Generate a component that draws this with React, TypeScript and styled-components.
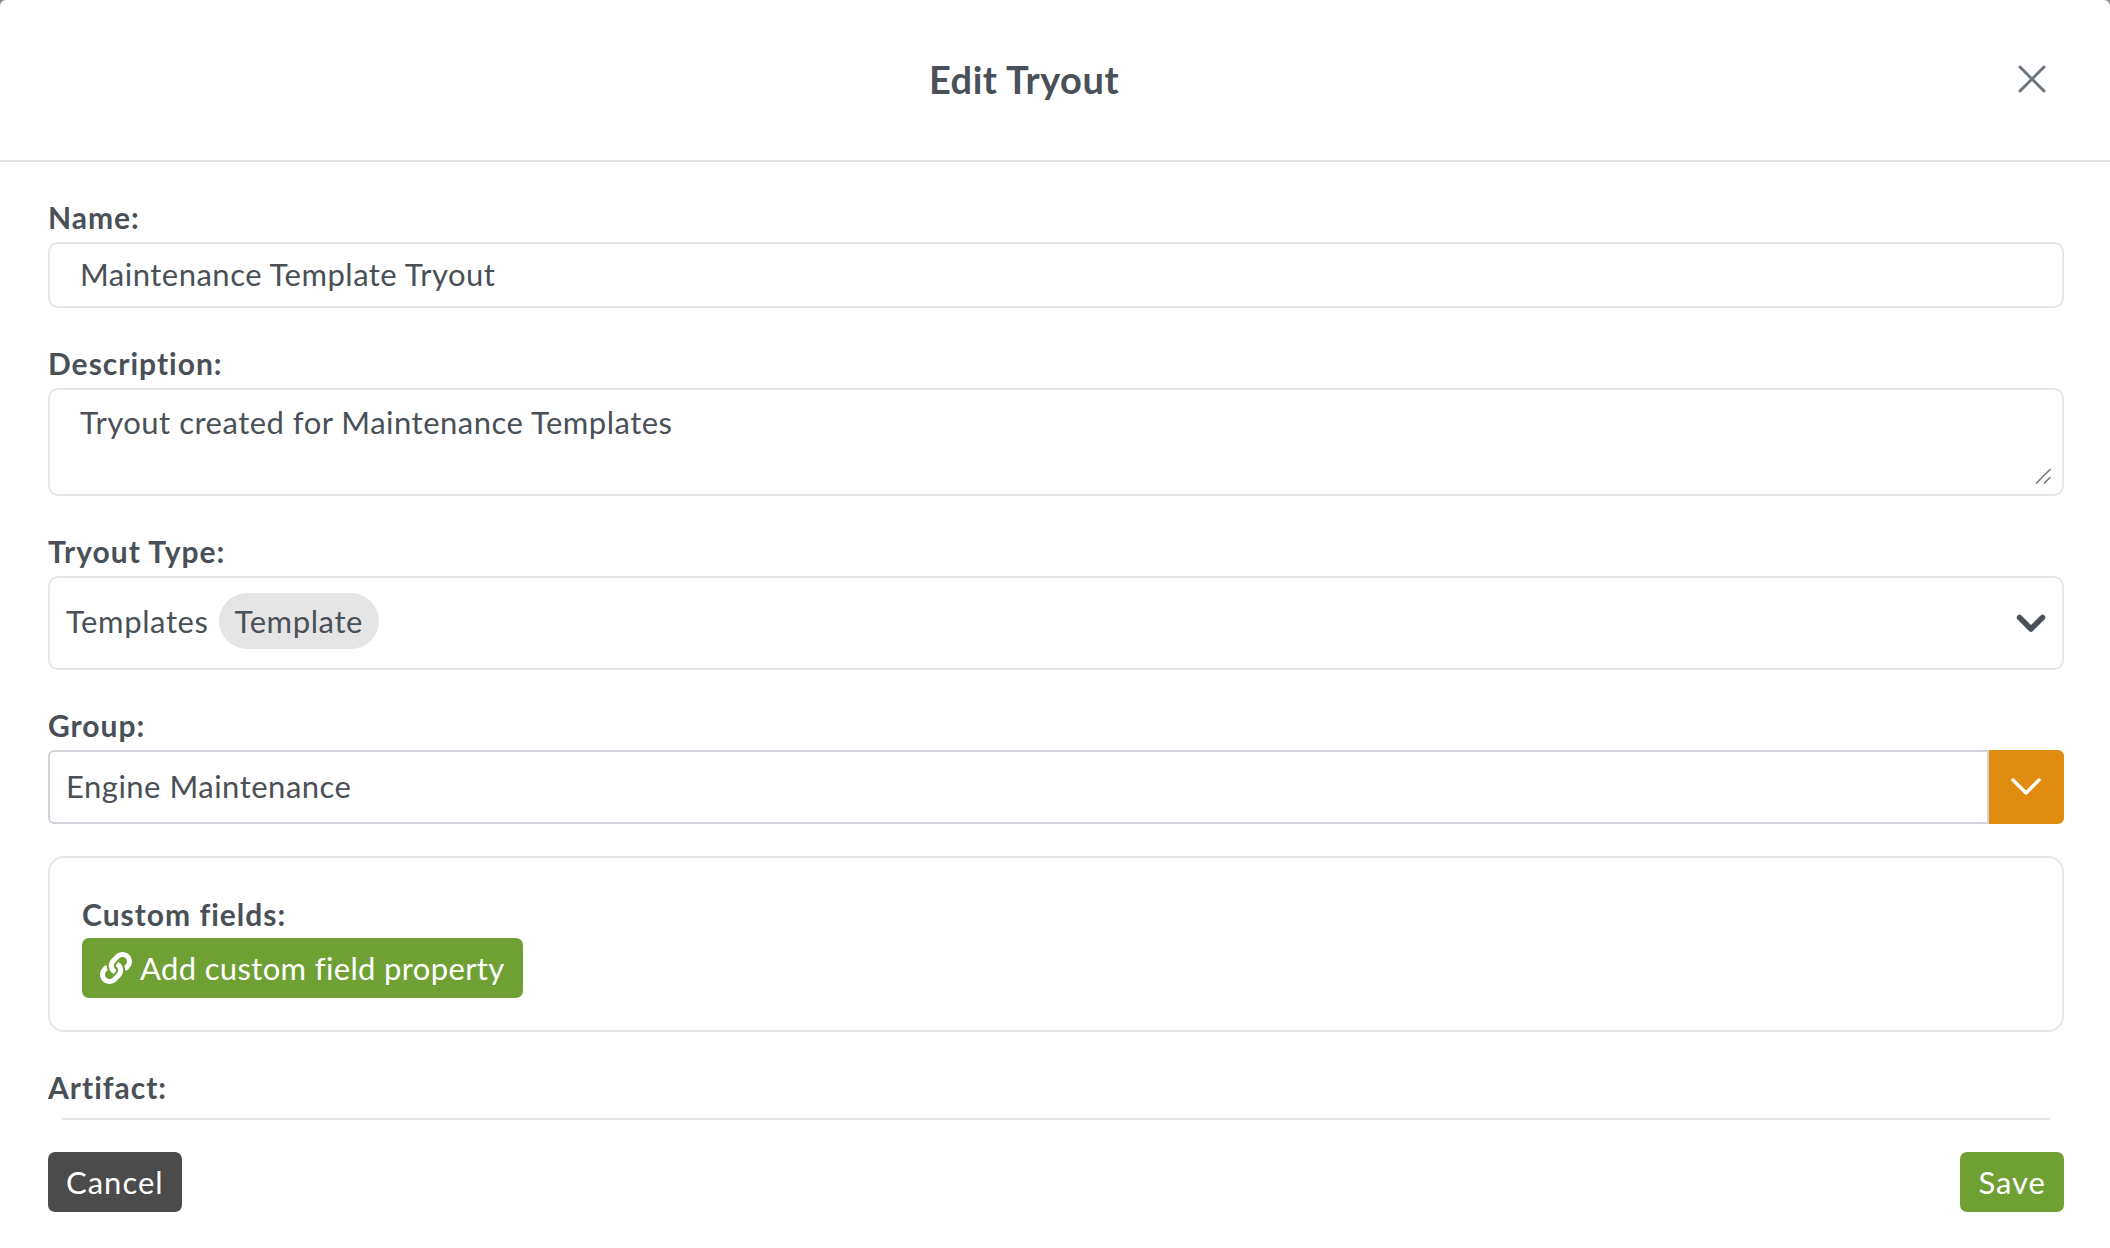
import React from 'react';
import styled, { createGlobalStyle } from 'styled-components';
import { FaLink } from 'react-icons/fa';

const Global = createGlobalStyle`
  html, body { margin: 0; padding: 0; background: #8f8f8f; }
  * { box-sizing: border-box; }
  body { font-family: Lato, "Open Sans", "Liberation Sans", sans-serif; color: #495057; }
`;

const Modal = styled.div`
  width: 2110px;
  height: 1248px;
  overflow: hidden;
  background: #fff;
  border-radius: 6px 6px 0 0;
`;

const Header = styled.header`
  height: 162px;
  display: flex;
  align-items: center;
  padding: 0 62px 2px 48px;
  border-bottom: 2px solid #dee2e6;
`;

const Title = styled.h1`
  flex: 1;
  margin: 0 16px 0 0;
  text-align: center;
  font-size: 38px;
  line-height: 48px;
  font-weight: 700;
  letter-spacing: 0.5px;
  color: #495057;
`;

const CloseButton = styled.button`
  width: 32px;
  height: 32px;
  padding: 0;
  border: 0;
  background: none;
  color: #6c757d;
  display: flex;
  align-items: center;
  justify-content: center;
`;

const Body = styled.main`
  padding: 35px 46px 0 48px;
`;

const Label = styled.label<{ $gap?: number }>`
  display: block;
  font-size: 30px;
  line-height: 40px;
  font-weight: 700;
  letter-spacing: 1px;
  color: #495057;
  margin-bottom: ${p => p.$gap ?? 5}px;
`;

const TextInput = styled.input`
  display: block;
  width: 100%;
  height: 66px;
  padding: 0 30px 3px;
  border: 2px solid #e6e6e6;
  border-radius: 10px;
  font: 400 31px Lato, sans-serif;
  letter-spacing: 0.5px;
  color: #495057;
  outline: none;
  margin-bottom: 35px;
`;

const TextAreaWrap = styled.div`
  position: relative;
  margin-bottom: 35px;
`;

const TextArea = styled.textarea`
  display: block;
  width: 100%;
  height: 108px;
  padding: 11px 30px;
  border: 2px solid #e6e6e6;
  border-radius: 10px;
  font: 400 31px/42px Lato, sans-serif;
  letter-spacing: 0.5px;
  color: #495057;
  outline: none;
  resize: none;
`;

const ResizeGrip = styled.svg`
  position: absolute;
  right: 13px;
  bottom: 12px;
  width: 16px;
  height: 16px;
`;

const SelectBox = styled.div`
  height: 94px;
  display: flex;
  align-items: center;
  justify-content: space-between;
  padding: 0 16px;
  border: 2px solid #e6e6e6;
  border-radius: 10px;
  margin-bottom: 35px;
`;

const SelectValues = styled.div`
  display: flex;
  align-items: center;
  gap: 10px;
  font-size: 31px;
  letter-spacing: 0.6px;
  margin-bottom: 5px;
`;

const Chip = styled.span`
  height: 56px;
  padding: 0 16px;
  display: flex;
  align-items: center;
  border-radius: 28px;
  background: #e5e5e5;
`;

const GroupRow = styled.div`
  display: flex;
  height: 74px;
  margin-bottom: 32px;
`;

const GroupField = styled.div`
  flex: 1;
  display: flex;
  align-items: center;
  padding: 0 16px 2px;
  border: 2px solid #ced4da;
  border-radius: 6px 0 0 6px;
  font-size: 31px;
  letter-spacing: 0.5px;
`;

const GroupToggle = styled.div`
  width: 75px;
  display: flex;
  align-items: center;
  justify-content: center;
  padding-right: 1px;
  background: #df8c11;
  border-radius: 0 6px 6px 0;
  color: #fff;
`;

const CustomCard = styled.section`
  height: 176px;
  padding: 36px 32px 0;
  border: 2px solid #e6e6e6;
  border-radius: 16px;
  margin-bottom: 35px;
`;

const PrimaryButton = styled.button<{ $tracking?: number }>`
  height: 60px;
  display: inline-flex;
  align-items: center;
  gap: 8px;
  padding: 0 18px;
  border: 0;
  border-radius: 7px;
  font: 400 31px Lato, sans-serif;
  letter-spacing: ${p => p.$tracking ?? 1}px;
  color: #fff;
  background: #6fa034;
`;

const CancelButton = styled(PrimaryButton)`
  background: #4b4b4b;
`;

const ArtifactRule = styled.hr`
  margin: 0 14px;
  border: 0;
  border-top: 2px solid #e6e6e6;
`;

const Footer = styled.footer`
  display: flex;
  justify-content: space-between;
  padding-top: 32px;
`;

export default function App() {
  return (
    <>
      <Global />
      <Modal>
        <Header>
          <Title>Edit Tryout</Title>
          <CloseButton aria-label="Close">
            <svg width="28" height="28" viewBox="0 0 28 28" fill="none" stroke="currentColor" strokeWidth="3" strokeLinecap="round">
              <path d="M2 2 L26 26 M26 2 L2 26" />
            </svg>
          </CloseButton>
        </Header>
        <Body>
          <Label>Name:</Label>
          <TextInput defaultValue="Maintenance Template Tryout" />
          <Label>Description:</Label>
          <TextAreaWrap>
            <TextArea defaultValue="Tryout created for Maintenance Templates" />
            <ResizeGrip viewBox="0 0 16 16" fill="none" stroke="#777" strokeWidth="1.5">
              <path d="M1 15.5 L15.5 1 M9 15.5 L15.5 9" />
            </ResizeGrip>
          </TextAreaWrap>
          <Label>Tryout Type:</Label>
          <SelectBox>
            <SelectValues>
              <span>Templates</span>
              <Chip>Template</Chip>
            </SelectValues>
            <svg width="30" height="20" viewBox="0 0 30 20" fill="none" stroke="#495057" strokeWidth="5.5" strokeLinecap="round" strokeLinejoin="round">
              <path d="M3.5 4.5 L15 16 L26.5 4.5" />
            </svg>
          </SelectBox>
          <Label>Group:</Label>
          <GroupRow>
            <GroupField>Engine Maintenance</GroupField>
            <GroupToggle>
              <svg width="30" height="18" viewBox="0 0 30 18" fill="none" stroke="currentColor" strokeWidth="3.4" strokeLinecap="round" strokeLinejoin="round">
                <path d="M2 2 L15 15 L28 2" />
              </svg>
            </GroupToggle>
          </GroupRow>
          <CustomCard>
            <Label $gap={4}>Custom fields:</Label>
            <PrimaryButton $tracking={0.35}>
              <FaLink size={32} />
              Add custom field property
            </PrimaryButton>
          </CustomCard>
          <Label $gap={11}>Artifact:</Label>
          <ArtifactRule />
          <Footer>
            <CancelButton>Cancel</CancelButton>
            <PrimaryButton>Save</PrimaryButton>
          </Footer>
        </Body>
      </Modal>
    </>
  );
}
